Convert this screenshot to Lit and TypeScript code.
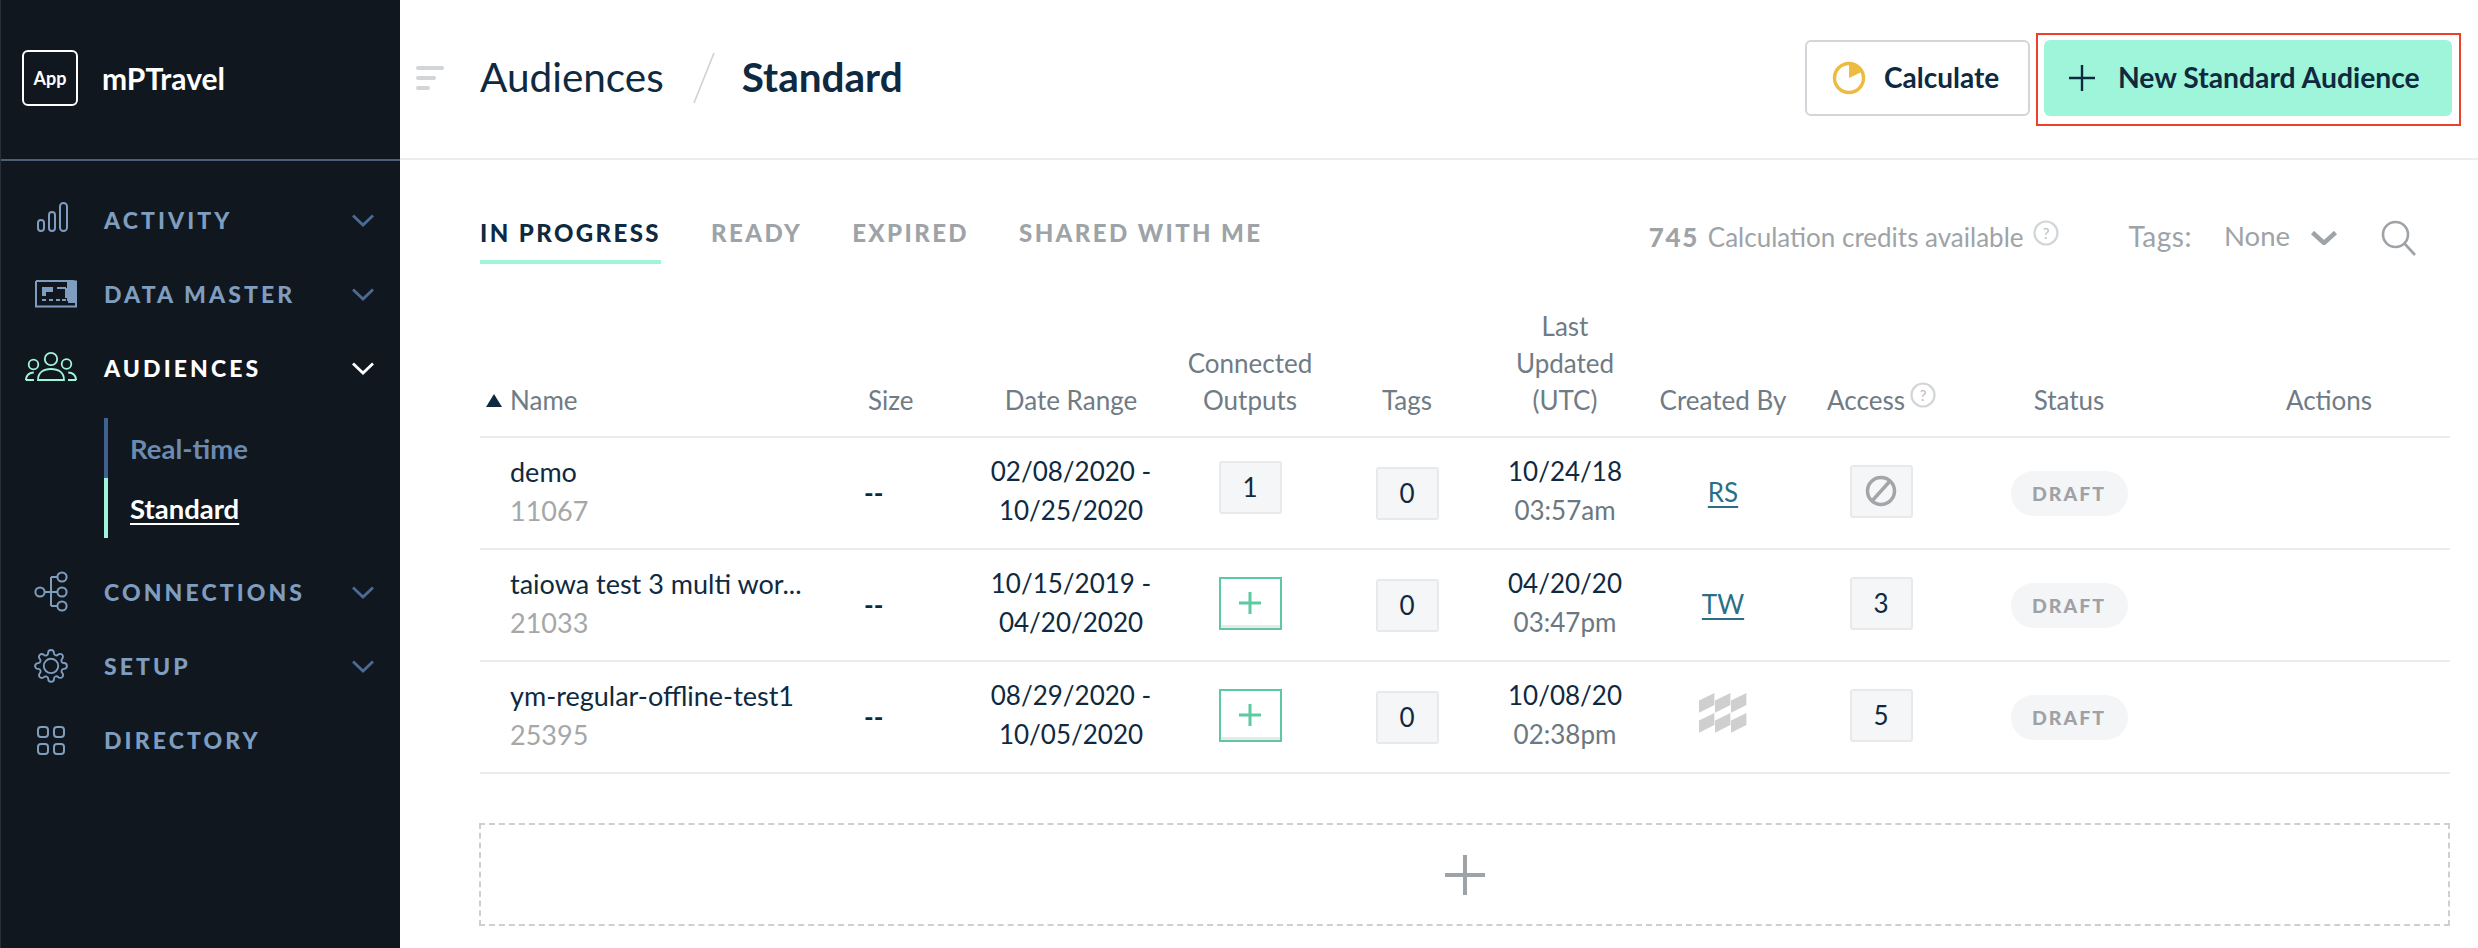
import { LitElement, html, css, svg } from "lit";
import { customElement } from "lit/decorators.js";

const chevron = html`<svg class="chev" viewBox="0 0 22 13" fill="none" stroke="currentColor" stroke-width="2.8"><path d="M1 1.5l10 9.5 10-9.5"/></svg>`;

const icons: Record<string, unknown> = {
  activity: html`<svg class="ico" viewBox="0 0 52 40" fill="none" stroke="currentColor" stroke-width="2"><rect x="13" y="20" width="6" height="11" rx="3"/><rect x="24" y="12" width="6" height="19" rx="3"/><rect x="35" y="3" width="7" height="28" rx="3.5"/></svg>`,
  data: html`<svg class="ico" viewBox="-5 0 52 40" fill="none" stroke="currentColor" stroke-width="2"><path d="M6 7h32v20M46 6.5v26H6V7" /><path d="M38 6h5a3 3 0 0 1 3 3v20H38z" fill="currentColor" stroke="none"/><path d="M12 13h11v5h-7v4h-4z" fill="currentColor" stroke="none"/><path d="M27 14h9M36 14v10M12 26h4M19 26h4M26 26h4M32 26h4" stroke-width="2"/></svg>`,
  audiences: html`<svg class="ico" viewBox="0 0 52 40" fill="none" stroke="currentColor" stroke-width="1.8"><circle cx="26" cy="11" r="6.2"/><circle cx="8.5" cy="16.5" r="4.8"/><circle cx="41.5" cy="16" r="4.8"/><path d="M13 32c0-8 6-11 13-11s13 3 13 11z"/><path d="M0.8 32c.6-5 4-7.5 8-7.5M9 32H.8M51.2 32c-.6-5-4-7.5-8-7.5M43 32h8.2"/></svg>`,
  connections: html`<svg class="ico" viewBox="-1 0 52 44" fill="none" stroke="currentColor" stroke-width="2"><circle cx="14" cy="22" r="4.6"/><circle cx="36" cy="7" r="4.6"/><circle cx="36" cy="22" r="4.6"/><circle cx="36" cy="36" r="4.6"/><path d="M19 22h12M25 7h6M25 36h6M25 7v29"/></svg>`,
  setup: html`<svg class="ico" viewBox="-6 -1.8 36 27.7" fill="none" stroke="currentColor" stroke-width="1.3"><circle cx="12" cy="12" r="5"/><path d="M19.4 15a1.65 1.65 0 0 0 .33 1.82l.06.06a2 2 0 0 1 0 2.83 2 2 0 0 1-2.83 0l-.06-.06a1.65 1.65 0 0 0-1.82-.33 1.65 1.65 0 0 0-1 1.51V21a2 2 0 0 1-2 2 2 2 0 0 1-2-2v-.09A1.65 1.65 0 0 0 9 19.4a1.65 1.65 0 0 0-1.82.33l-.06.06a2 2 0 0 1-2.83 0 2 2 0 0 1 0-2.83l.06-.06a1.65 1.65 0 0 0 .33-1.82 1.65 1.65 0 0 0-1.51-1H3a2 2 0 0 1-2-2 2 2 0 0 1 2-2h.09A1.65 1.65 0 0 0 4.6 9a1.65 1.65 0 0 0-.33-1.82l-.06-.06a2 2 0 0 1 0-2.83 2 2 0 0 1 2.83 0l.06.06a1.65 1.65 0 0 0 1.82.33H9a1.65 1.65 0 0 0 1-1.51V3a2 2 0 0 1 2-2 2 2 0 0 1 2 2v.09a1.65 1.65 0 0 0 1 1.51 1.65 1.65 0 0 0 1.82-.33l.06-.06a2 2 0 0 1 2.83 0 2 2 0 0 1 0 2.83l-.06.06a1.65 1.65 0 0 0-.33 1.82V9a1.65 1.65 0 0 0 1.51 1H21a2 2 0 0 1 2 2 2 2 0 0 1-2 2h-.09a1.65 1.65 0 0 0-1.51 1z"/></svg>`,
  directory: html`<svg class="ico" viewBox="0 0 52 40" fill="none" stroke="currentColor" stroke-width="2"><rect x="13" y="7" width="10" height="10" rx="3"/><rect x="29" y="7" width="10" height="10" rx="3"/><rect x="13" y="24" width="10" height="10" rx="3"/><rect x="29" y="24" width="10" height="10" rx="3"/></svg>`,
};

const help = html`<svg class="help" viewBox="0 0 26 26" fill="none"><circle cx="13" cy="13" r="11.5" stroke="#d3d6d9" stroke-width="2.2"/><text x="13" y="18.5" text-anchor="middle" font-size="15" font-family="Lato, sans-serif" fill="#b9bdc1">?</text></svg>`;

const hashCells = [0, 1, 2].flatMap((c) => [0, 1].map((r) => {
  const x = c * 16, y = r * 20;
  return svg`<polygon points="${x},${y + 7.5} ${x + 15.4},${y} ${x + 15.4},${y + 12} ${x},${y + 19.7}"/>`;
}));

type Row = { name: string; id: string; d1: string; d2: string; out: string; u1: string; u2: string; by: string; access: string };
const rows: Row[] = [
  { name: "demo", id: "11067", d1: "02/08/2020 -", d2: "10/25/2020", out: "1", u1: "10/24/18", u2: "03:57am", by: "RS", access: "none" },
  { name: "taiowa test 3 multi wor...", id: "21033", d1: "10/15/2019 -", d2: "04/20/2020", out: "+", u1: "04/20/20", u2: "03:47pm", by: "TW", access: "3" },
  { name: "ym-regular-offline-test1", id: "25395", d1: "08/29/2020 -", d2: "10/05/2020", out: "+", u1: "10/08/20", u2: "02:38pm", by: "", access: "5" },
];

@customElement("app-root")
export class AppRoot extends LitElement {
  static styles = css`
    :host { display: block; width: 2478px; height: 948px; overflow: hidden; font-family: Lato, "Liberation Sans", sans-serif; color: #0f2a40; background: #fff; }
    * { box-sizing: border-box; }
    .app { display: flex; height: 948px; }
    .side { width: 400px; flex: none; background: #11171e; border-left: 1px solid #2a3038; color: #7f9dbf; }
    .brand { height: 161px; border-bottom: 2px solid #4e5f75; display: flex; align-items: center; padding: 0 0 4px 21px; }
    .logo { width: 56px; height: 56px; border: 2px solid #fff; border-radius: 6px; display: flex; align-items: center; justify-content: center; color: #fff; font-size: 18px; font-weight: 700; margin-right: 24px; }
    .bname { color: #fff; font-size: 30px; font-weight: 700; }
    .nav { padding-top: 22px; }
    .item { height: 74px; display: flex; align-items: center; }
    .ico { width: 52px; height: 40px; margin: 0 27px 0 24px; flex: none; }
    .item.conn .ico { height: 44px; }
    .label { font-size: 23px; font-weight: 900; letter-spacing: 3.1px; flex: 1; }
    .chev { width: 22px; height: 13px; margin-right: 26px; color: #4b6a94; }
    .item.active { color: #fff; }
    .item.active .ico { color: #9ff5d9; }
    .item.active .chev { color: #fff; }
    .sub { margin: 13px 0 17px 103px; }
    .sub div { height: 60px; display: flex; align-items: center; padding-left: 22px; border-left: 4px solid #3f6291; font-size: 27.5px; font-weight: 700; color: #6c8bb0; }
    .sub div.on { border-left-color: #9ff5d9; color: #fff; }
    .sub div.on span { text-decoration: underline; text-underline-offset: 4px; text-decoration-thickness: 2px; }
    .main { flex: 1; min-width: 0; display: flex; flex-direction: column; }
    .head { height: 160px; flex: none; border-bottom: 2px solid #ebecee; display: flex; align-items: center; padding: 0 26px 2px 16px; }
    .toggle { display: flex; flex-direction: column; gap: 6px; width: 28px; margin-right: 36px; }
    .toggle i { display: block; height: 4px; border-radius: 2px; background: #d2d5d8; }
    .toggle .m { width: 20px; }
    .toggle .s { width: 14px; }
    .crumb { font-size: 40.5px; color: #0f2a40; padding-bottom: 4px; }
    .slash { width: 22px; height: 50px; margin: 0 27px 0 29px; }
    .crumb.b { font-weight: 700; }
    .spacer { flex: 1; }
    .btn { height: 76px; display: flex; align-items: center; border-radius: 6px; font-size: 28.3px; font-weight: 700; color: #0f2a40; }
    .btn span { padding-bottom: 3px; }
    .calc { width: 225px; border: 2px solid #d2d5d9; padding-left: 25px; gap: 18px; margin-right: 14px; font-size: 28px; }
    .calc svg { width: 34px; height: 34px; flex: none; }
    .new { width: 408px; background: #9ff5d9; padding-left: 24px; gap: 22px; position: relative; }
    .new::after { content: ""; position: absolute; top: -7px; bottom: -10px; left: -8px; right: -9px; border: 2px solid #ee4028; }
    .new svg { width: 28px; height: 28px; flex: none; }
    .content { padding: 0 28px 0 80px; display: flex; flex-direction: column; }
    .bar { display: flex; align-items: flex-start; height: 102px; }
    .tabs { display: flex; gap: 50px; padding-top: 58px; }
    .tab { font-size: 24px; font-weight: 900; letter-spacing: 2.4px; color: #9ea3a8; height: 46px; line-height: 30px; }
    .tab.on { color: #0f2a40; border-bottom: 4px solid #9ff5d9; }
    .tools { margin-left: auto; display: flex; align-items: center; height: 60px; margin-top: 48px; color: #9ea3a8; font-size: 26px; }
    .credits { color: #9ea3a8; font-size: 26px; display: flex; align-items: center; margin-right: 70px; margin-top: -2px; }
    .credits b { font-weight: 900; letter-spacing: 1.6px; margin-right: 9px; }
    .help { width: 26px; height: 26px; margin: -8px 0 0 9px; flex: none; }
    .tagl { margin-right: 32px; font-size: 28px; letter-spacing: 0.5px; margin-top: -5px; }
    .none { font-size: 27.5px; margin-top: -5px; }
    .caret { width: 26px; height: 14px; margin: 0 44px 0 21px; color: #9ea3a8; }
    .search { width: 36px; height: 36px; margin-right: 33px; }
    .row { display: grid; grid-template-columns: 380px 100px 222px 136px 178px 138px 178px 138px 238px 262px; border-bottom: 2px solid #ebecee; height: 112px; align-items: center; font-size: 26px; }
    .row > div { text-align: center; display: flex; flex-direction: column; align-items: center; }
    .row .l { text-align: left; align-items: flex-start; padding-left: 30px; }
    .row .s { padding-left: 4px; align-items: flex-start; font-weight: 700; }
    .row .nm { font-size: 27px; }
    .hdr { height: 176px; align-items: end; font-size: 26px; color: #6f7b85; line-height: 37px; padding-bottom: 17px; }
    .hdr .a { padding-left: 20px; }
    .hdr .l { flex-direction: row; align-items: center; position: relative; }
    .hdr .n { padding-left: 0; }
    .tri { width: 16px; height: 13px; margin: 0 8px 0 6px; flex: none; }
    .hdr .s { padding-left: 8px; font-weight: 400; }
    .hdr .acc { flex-direction: row; justify-content: center; align-items: flex-start; padding-left: 1px; }
    .acc .help { margin: 0 0 0 5px; }
    .two { line-height: 39px; padding-bottom: 5px; }
    .gray { color: #a5a7a9; }
    .mut { color: #6b7880; }
    .box { width: 63px; height: 53px; background: #f5f6f8; border: 2px solid #e8e9eb; border-radius: 3px; display: flex; align-items: center; justify-content: center; }
    .box.up { margin-bottom: 12px; }
    .box.up2 { margin-bottom: 4px; }
    .box.plus { background: #fff; border-color: #5cc9a0; border-radius: 0; box-shadow: inset 0 -3px 0 #e8e9eb; margin-bottom: 4px; }
    .box.plus svg { width: 24px; height: 24px; }
    .box svg.no { width: 32px; height: 32px; }
    .by { color: #2a6f85; text-decoration: underline; text-underline-offset: 4px; text-decoration-thickness: 2px; margin-bottom: 3px; }
    .hash { width: 48px; height: 40px; fill: #cfcfcf; margin-bottom: 8px; }
    .draft { width: 117px; height: 45px; border-radius: 23px; background: #f4f5f6; color: #9ea2a6; font-size: 19.5px; font-weight: 900; letter-spacing: 2px; display: flex; align-items: center; justify-content: center; }
    .add { margin-top: 49px; height: 103px; border: 2px dashed #cfcfcf; display: flex; align-items: center; justify-content: center; margin-left: -1px; }
    .add svg { width: 42px; height: 42px; }
  `;

  private item(key: string, label: string, arrow = true, cls = "") {
    return html`<div class="item ${cls}">${icons[key]}<span class="label">${label}</span>${arrow ? chevron : ""}</div>`;
  }

  private outCell(v: string) {
    if (v === "+") return html`<div class="box plus"><svg viewBox="0 0 24 24" fill="none" stroke="#5cc9a0" stroke-width="3"><path d="M12 1v22M1 12h22"/></svg></div>`;
    return html`<div class="box up">${v}</div>`;
  }

  private accessCell(v: string) {
    if (v === "none") return html`<div class="box up2"><svg class="no" viewBox="0 0 32 32" fill="none" stroke="#a3a6a9" stroke-width="3.5"><circle cx="16" cy="16" r="13.5"/><path d="M7 26L25 6"/></svg></div>`;
    return html`<div class="box up2">${v}</div>`;
  }

  render() {
    return html`<div class="app">
      <aside class="side">
        <div class="brand"><div class="logo">App</div><div class="bname">mPTravel</div></div>
        <nav class="nav">
          ${this.item("activity", "ACTIVITY")}
          ${this.item("data", "DATA MASTER")}
          ${this.item("audiences", "AUDIENCES", true, "active")}
          <div class="sub"><div>Real-time</div><div class="on"><span>Standard</span></div></div>
          ${this.item("connections", "CONNECTIONS", true, "conn")}
          ${this.item("setup", "SETUP")}
          ${this.item("directory", "DIRECTORY", false)}
        </nav>
      </aside>
      <main class="main">
        <header class="head">
          <div class="toggle"><i></i><i class="m"></i><i class="s"></i></div>
          <span class="crumb">Audiences</span>
          <svg class="slash" viewBox="0 0 22 50"><path d="M21 0L1 50" stroke="#cfd1d4" stroke-width="1.6"/></svg>
          <span class="crumb b">Standard</span>
          <span class="spacer"></span>
          <div class="btn calc"><svg viewBox="0 0 34 34"><circle cx="17" cy="17" r="14.5" fill="none" stroke="#ecbb3f" stroke-width="3.4"/><path d="M17 2a15 15 0 0 1 13.5 8.5L17 17z" fill="#ecbb3f"/></svg><span>Calculate</span></div>
          <div class="btn new"><svg viewBox="0 0 28 28" fill="none" stroke="#0f2a40" stroke-width="2.4"><path d="M14 1v26M1 14h26"/></svg><span>New Standard Audience</span></div>
        </header>
        <section class="content">
          <div class="bar">
            <div class="tabs"><div class="tab on">IN PROGRESS</div><div class="tab">READY</div><div class="tab">EXPIRED</div><div class="tab">SHARED WITH ME</div></div>
            <div class="tools">
              <div class="credits"><b>745</b><span>Calculation credits available</span>${help}</div>
              <span class="tagl">Tags:</span><span class="none">None</span>
              <svg class="caret" viewBox="0 0 26 14" fill="none" stroke="currentColor" stroke-width="4.5"><path d="M1.5 1.5L13 12 24.5 1.5"/></svg>
              <svg class="search" viewBox="0 0 36 36" fill="none" stroke="#9ea3a8" stroke-width="2.6"><circle cx="14.5" cy="14.5" r="12.5"/><path d="M23.5 23.5L34 35"/></svg>
            </div>
          </div>
          <div class="row hdr">
            <div class="l n"><svg class="tri" viewBox="0 0 16 13"><path d="M8 0l8 13H0z" fill="#0f2a40"/></svg><span>Name</span></div>
            <div class="s">Size</div>
            <div>Date Range</div>
            <div>Connected<br />Outputs</div>
            <div>Tags</div>
            <div>Last<br />Updated<br />(UTC)</div>
            <div>Created By</div>
            <div class="acc"><span>Access</span>${help}</div>
            <div>Status</div>
            <div class="a">Actions</div>
          </div>
          ${rows.map((r) => html`<div class="row">
            <div class="l two nm"><span>${r.name}</span><span class="gray">${r.id}</span></div>
            <div class="s">--</div>
            <div class="two"><span>${r.d1}</span><span>${r.d2}</span></div>
            <div>${this.outCell(r.out)}</div>
            <div><div class="box">0</div></div>
            <div class="two"><span>${r.u1}</span><span class="mut">${r.u2}</span></div>
            <div>${r.by ? html`<span class="by">${r.by}</span>` : html`<svg class="hash" viewBox="0 0 48 40">${hashCells}</svg>`}</div>
            <div>${this.accessCell(r.access)}</div>
            <div><div class="draft">DRAFT</div></div>
            <div></div>
          </div>`)}
          <div class="add"><svg viewBox="0 0 42 42" fill="none" stroke="#9ea3a8" stroke-width="4"><path d="M21 1v40M1 21h40"/></svg></div>
        </section>
      </main>
    </div>`;
  }
}
